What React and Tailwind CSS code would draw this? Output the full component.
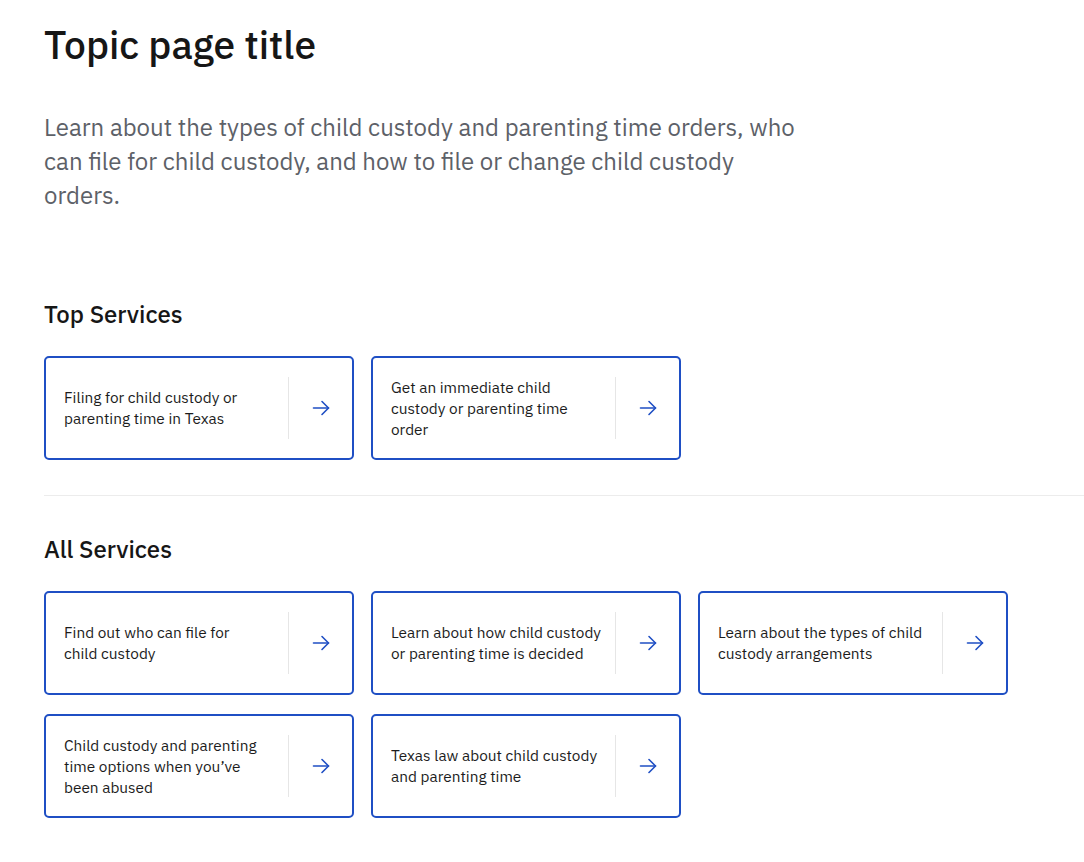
const topServices = [
  'Filing for child custody or parenting time in Texas',
  'Get an immediate child custody or parenting time order',
]

const allServices = [
  'Find out who can file for child\u00a0custody',
  'Learn about how child custody or parenting time is decided',
  'Learn about the types of child custody arrangements',
  'Child custody and parenting time options when you’ve been abused',
  'Texas law about child custody and parenting time',
]

function Arrow() {
  return (
    <svg width="18" height="18" viewBox="0 0 18 18" fill="none" stroke="#1f4fc4" strokeWidth="1.6" strokeLinecap="round" strokeLinejoin="round">
      <path d="M1.5 9h15" />
      <path d="M10 2.5L16.5 9L10 15.5" />
    </svg>
  )
}

function ServiceCard({ title }) {
  return (
    <a
      href="#"
      className="flex items-stretch h-[104px] w-[310px] rounded-[5px] border-2 border-[#1f4fc4] bg-white"
    >
      <div className="flex-1 flex items-center pl-[18px] pr-3 text-[15.4px] leading-[21px] text-[#1c1c1c]">
        {title}
      </div>
      <div className="my-[19px] w-px bg-[#e6e6e6]" />
      <div className="w-[63px] flex items-center justify-center">
        <Arrow />
      </div>
    </a>
  )
}

export default function App() {
  return (
    <div className="min-h-screen bg-white pl-[44px] pt-[20px] pb-10 font-['IBM_Plex_Sans','Noto_Sans',sans-serif]">
      <h1 className="text-[39px] leading-[50px] font-medium text-[#161616]">Topic page title</h1>
      <p className="mt-[40px] max-w-[760px] text-[24px] leading-[34px] text-[#5d6168]">
        Learn about the types of child custody and parenting time orders, who can file for child custody, and how to file or change child custody orders.
      </p>

      <h2 className="mt-[86px] text-[24px] leading-[32px] font-medium text-[#161616]">Top Services</h2>
      <div className="mt-[26px] flex gap-[17px]">
        {topServices.map((s) => (
          <ServiceCard key={s} title={s} />
        ))}
      </div>

      <hr className="mt-[35px] border-0 h-px bg-[#ececec]" />

      <h2 className="mt-[37px] text-[24px] leading-[32px] font-medium text-[#161616]">All Services</h2>
      <div className="mt-[26px] grid grid-cols-[repeat(3,310px)] gap-x-[17px] gap-y-[19px]">
        {allServices.map((s) => (
          <ServiceCard key={s} title={s} />
        ))}
      </div>
    </div>
  )
}
